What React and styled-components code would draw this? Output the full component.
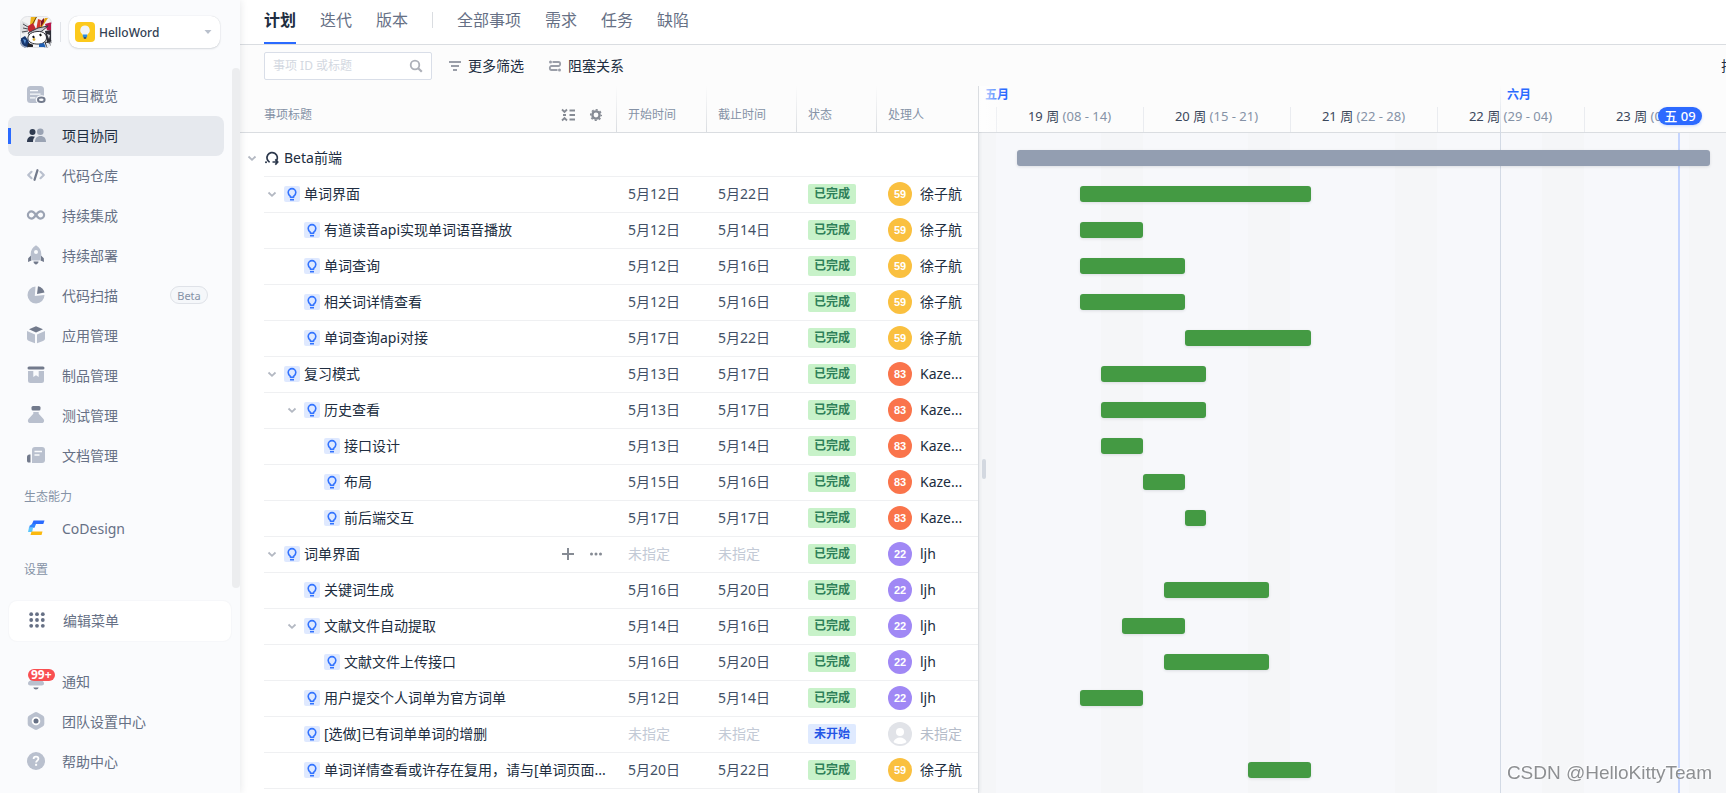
import React from "react";
import styled, { createGlobalStyle, css } from "styled-components";

const DAY = 21;
const FONT = `"Noto Sans", "Noto Sans CJK SC", sans-serif`;
const C = {
  text: "#202d40",
  sub: "#667085",
  muted: "#8592a6",
  faint: "#c3cad6",
  blue: "#2a6aff",
  line: "#dadde1",
  light: "#b9c0ce",
  dark: "#727a8c",
};

const Global = createGlobalStyle`
  * { box-sizing: border-box; }
  body { margin: 0; font-family: ${FONT}; color: ${C.text}; font-size: 14px; background: #fff; overflow: hidden; }
  button, input, select { font: inherit; color: inherit; margin: 0; }
  button { background: none; border: 0; padding: 0; cursor: pointer; }
  a { color: inherit; text-decoration: none; }
  svg { display: block; flex: none; }
`;

/* ---------- shell ---------- */
const Shell = styled.div`
  display: flex;
  height: 100vh;
  overflow: hidden;
`;
const Sidebar = styled.aside`
  position: relative;
  z-index: 3;
  flex: 0 0 240px;
  display: flex;
  flex-direction: column;
  background: #fafbfd;
  box-shadow: 0 0 8px rgba(30, 40, 60, 0.12);
`;
const SideHead = styled.div`
  display: flex;
  align-items: center;
  gap: 8px;
  padding: 16px 20px;
`;
const HeadRule = styled.span`
  width: 1px;
  height: 20px;
  background: #e1e4e9;
`;
const ProjectBox = styled.label`
  flex: 1;
  min-width: 0;
  display: flex;
  align-items: center;
  gap: 4px;
  height: 32px;
  padding: 0 8px 0 6px;
  border-radius: 9px;
  background: #fff;
  box-shadow: 0 0 1px rgba(30, 40, 60, 0.2), 0 1px 2px rgba(30, 40, 60, 0.14);
`;
const ProjectSelect = styled.select`
  flex: 1;
  min-width: 0;
  appearance: none;
  border: 0;
  padding: 0;
  background: none;
  font-size: 12px;
  font-weight: 500;
  color: #333f54;
  outline: none;
`;
const NavScroll = styled.nav`
  position: relative;
  padding: 12px 16px 0 8px;
`;
const ScrollThumb = styled.span`
  position: absolute;
  top: 4px;
  bottom: -6px;
  right: 0;
  width: 8px;
  border-radius: 4px;
  background: #ecedef;
`;
const NavLink = styled.a`
  position: relative;
  display: flex;
  align-items: center;
  gap: 16px;
  height: 40px;
  padding: 0 16px 2px 18px;
  border-radius: 8px;
  color: ${C.sub};
  ${(p) =>
    p.$active &&
    css`
      background: #e6e9ee;
      color: ${C.text};
      &::before {
        content: "";
        position: absolute;
        left: 0;
        top: 12px;
        width: 3px;
        height: 16px;
        background: ${C.blue};
      }
    `}
`;
const BetaTag = styled.span`
  margin-left: auto;
  width: 38px;
  height: 18px;
  border: 1px solid #dfe2e8;
  border-radius: 9px;
  background: #f5f7fa;
  font-size: 11px;
  line-height: 17px;
  text-align: center;
  color: ${C.muted};
`;
const NavLabel = styled.h2`
  margin: 9px 0 0;
  padding-left: 16px;
  font-size: 12px;
  font-weight: 400;
  line-height: 24px;
  color: ${C.muted};
`;
const EditMenu = styled.button`
  display: flex;
  align-items: center;
  gap: 16px;
  height: 40px;
  margin: 19px 9px 0;
  padding: 0 18px 2px;
  border-radius: 8px;
  background: #fff;
  box-shadow: 0 0 2px rgba(30, 40, 60, 0.07);
  color: ${C.sub};
`;
const SideFoot = styled.div`
  margin-top: auto;
  padding: 0 16px 11px 8px;
`;
const Count = styled.span`
  position: absolute;
  left: 20px;
  top: 7px;
  height: 12px;
  padding: 0 3px;
  border-radius: 6px;
  background: #f94f51;
  color: #fff;
  font-size: 12px;
  font-weight: 700;
  line-height: 12px;
`;

/* ---------- main ---------- */
const Main = styled.main`
  flex: 1;
  min-width: 0;
  display: flex;
  flex-direction: column;
`;
const Tabs = styled.nav`
  display: flex;
  align-items: center;
  gap: 24px;
  flex: 0 0 45px;
  padding: 0 24px;
  border-bottom: 1px solid ${C.line};
  font-size: 16px;
`;
const Tab = styled.a`
  height: 44px;
  line-height: 40px;
  white-space: nowrap;
  color: ${C.sub};
  ${(p) =>
    p.$active &&
    css`
      color: ${C.text};
      font-weight: 700;
      border-bottom: 2px solid ${C.blue};
    `}
`;
const TabRule = styled.span`
  width: 1px;
  height: 16px;
  margin-bottom: 4px;
  background: ${C.line};
`;
const Toolbar = styled.div`
  position: relative;
  z-index: 2;
  display: flex;
  align-items: center;
  flex: 0 0 41px;
  padding-left: 24px;
  background: #fcfcfc;
  overflow: hidden;
`;
const SearchBox = styled.label`
  display: flex;
  align-items: center;
  width: 168px;
  height: 28px;
  margin-right: 16px;
  padding: 0 8px;
  border: 1px solid #d9dee8;
  border-radius: 2px;
  background: #fff;
`;
const SearchInput = styled.input`
  flex: 1;
  min-width: 0;
  border: 0;
  padding: 0;
  outline: none;
  background: none;
  font-size: 12px;
  &::placeholder {
    color: #d3d8e1;
    opacity: 1;
  }
`;
const ToolButton = styled.button`
  display: flex;
  align-items: center;
  gap: 6px;
  margin-right: 24px;
  line-height: 20px;
  white-space: nowrap;
`;
const SortButton = styled(ToolButton)`
  flex: 0 0 28px;
  margin-left: auto;
  margin-right: -23px;
`;
const Board = styled.div`
  display: flex;
  flex: 1;
  min-height: 0;
`;

/* ---------- task table ---------- */
const TablePane = styled.section`
  flex: 0 0 739px;
  position: relative;
  z-index: 1;
  border-right: 1px solid ${C.line};
  background: #fff;
  box-shadow: 1px 0 3px rgba(30, 40, 60, 0.07);
`;
const Table = styled.table`
  width: 100%;
  table-layout: fixed;
  border-collapse: separate;
  border-spacing: 0;
`;
const HeadCell = styled.th`
  height: 47px;
  width: ${(p) => p.$w}px;
  padding: 11px 12px 0;
  border-bottom: 1px solid ${C.line};
  background: ${(p) =>
    p.$rule
      ? `linear-gradient(#fcfcfc, ${C.line}) left top / 1px 100% no-repeat, #fcfcfc`
      : "#fcfcfc"};
  text-align: left;
  font-size: 12px;
  font-weight: 400;
  line-height: 16px;
  color: ${C.muted};
`;
const HeadTitle = styled.div`
  display: flex;
  align-items: center;
  gap: 12px;
  padding-left: 12px;
`;
const Spacer = styled.span`
  flex: 1;
`;
const Cell = styled.td`
  height: ${(p) => (p.$tall ? 44 : 36)}px;
  padding: ${(p) => (p.$tall ? 8 : 0)}px 0 2px ${(p) => (p.$title ? 0 : 12)}px;
  background: linear-gradient(#eff0f2, #eff0f2) ${(p) => (p.$title ? 24 : 0)}px 100% / 100% 1px no-repeat;
  white-space: nowrap;
  line-height: 20px;
  color: ${(p) => (p.$empty ? C.faint : "#425066")};
`;
const TitleLine = styled.div`
  display: flex;
  align-items: center;
  gap: 4px;
  padding: 0 12px 0 ${(p) => 4 + p.$level * 20}px;
  color: ${C.text};
`;
const TitleText = styled.span`
  flex: 1;
  min-width: 0;
`;
const Toggle = styled.button`
  flex: 0 0 16px;
  height: 16px;
`;
const ToggleSlot = styled.span`
  flex: 0 0 16px;
`;
const RowActions = styled.span`
  display: flex;
  gap: 12px;
`;
const KindBox = styled.span`
  display: grid;
  place-items: center;
  flex: 0 0 16px;
  height: 16px;
  border-radius: 2px;
  background: ${(p) => (p.$plain ? "none" : "#dfe9ff")};
`;
const Status = styled.span`
  display: block;
  width: 48px;
  border-radius: 2px;
  text-align: center;
  font-size: 12px;
  font-weight: 700;
  line-height: 20px;
  background: ${(p) => (p.$open ? "#dfeaff" : "#c8f2c9")};
  color: ${(p) => (p.$open ? "#2456e6" : "#2f8059")};
`;
const Person = styled.div`
  display: flex;
  align-items: center;
  gap: 8px;
  color: ${(p) => (p.$empty ? "#b5bcc9" : C.text)};
`;
const Avatar = styled.span`
  width: 24px;
  height: 24px;
  border-radius: 50%;
  background: ${(p) => p.$color};
  color: #fff;
  text-align: center;
  font: 700 11px/24px "Liberation Sans", sans-serif;
`;

/* ---------- gantt ---------- */
const GanttPane = styled.section`
  position: relative;
  flex: 1;
  min-width: 0;
  display: flex;
  flex-direction: column;
  overflow: hidden;
`;
const GanttHead = styled.div`
  position: relative;
  flex: 0 0 47px;
  border-bottom: 1px solid ${C.line};
  background: #fcfcfc;
  &::before {
    content: "";
    position: absolute;
    z-index: 1;
    inset: 0 auto 0 0;
    width: 24px;
    background: linear-gradient(90deg, rgba(255, 255, 255, 0.9), rgba(255, 255, 255, 0));
  }
`;
const Months = styled.div`
  display: flex;
  height: 21px;
  font-size: 12px;
  font-weight: 700;
  line-height: 18px;
  color: ${C.blue};
`;
const Month = styled.span`
  flex: 0 0 ${(p) => p.$w}px;
  padding-left: 6px;
`;
const Weeks = styled.div`
  display: flex;
  height: 25px;
  margin-left: 17px;
`;
const Week = styled.span`
  flex: 0 0 ${7 * DAY}px;
  padding-right: 1px;
  border-left: 1px solid #eaecf0;
  text-align: center;
  font-size: 13px;
  line-height: 19px;
  white-space: pre;
  color: ${C.muted};
`;
const WeekNo = styled.span`
  color: #3b475b;
`;
const TodayPill = styled.span`
  position: absolute;
  z-index: 2;
  left: ${17 + 31 * DAY + 11}px;
  top: 21px;
  width: 44px;
  border-radius: 9px;
  background: #2d6aff;
  color: #fff;
  text-align: center;
  font-size: 13px;
  font-weight: 500;
  line-height: 18px;
  box-shadow: 0 1px 3px rgba(45, 106, 255, 0.25);
`;
const GanttBody = styled.div`
  position: relative;
  flex: 1;
  background: linear-gradient(#f5f6f8, #f5f6f8) 0 0 / 17px 100% no-repeat,
    repeating-linear-gradient(90deg, #f7f8fb 0 105px, #f5f6f8 105px 147px) 17px 0;
`;
const MonthLine = styled.span`
  position: absolute;
  z-index: 1;
  left: ${17 + 24 * DAY}px;
  top: 0;
  bottom: 0;
  width: 1px;
  background: linear-gradient(rgba(211, 218, 229, 0), #d3dae5 46px);
`;
const TodayLine = styled.span`
  position: absolute;
  left: ${17 + 32 * DAY + 10}px;
  top: 0;
  bottom: 0;
  width: 2px;
  background: #c5d5ff;
`;
const Lane = styled.div`
  position: relative;
  display: flex;
  align-items: center;
  height: ${(p) => (p.$tall ? 44 : 36)}px;
  padding: ${(p) => (p.$tall ? 8 : 0)}px 0 2px 17px;
`;
const Bar = styled.span`
  flex: 0 0 ${(p) => p.$days * DAY}px;
  height: 16px;
  margin-left: ${(p) => p.$offset * DAY}px;
  z-index: 2;
  border-radius: 3px;
  background: ${(p) => (p.$group ? "#939eb1" : "#449a43")};
  box-shadow: 0 1px 3px rgba(30, 40, 60, 0.12);
`;
const Handle = styled.span`
  position: absolute;
  z-index: 1;
  left: 3px;
  top: 50%;
  width: 4px;
  height: 20px;
  margin-top: -4px;
  border-radius: 2px;
  background: #d3d8e0;
`;
const Watermark = styled.span`
  position: fixed;
  z-index: 5;
  right: 14px;
  bottom: 8px;
  font: 19px/24px "Liberation Sans", sans-serif;
  color: #8d8f92;
  text-shadow: -1px -1px 0 #fff;
`;

/* ---------- icons ---------- */
const Svg = ({ s = 20, v = 20, children, ...r }) => (
  <svg width={s} height={s} viewBox={`0 0 ${v} ${v}`} fill="none" aria-hidden="true" {...r}>
    {children}
  </svg>
);

const icons = {
  overview: (
    <>
      <rect x="1" y="1" width="17" height="17" rx="3.5" fill={C.light} />
      <path d="M4 5.6h8M4 9.2h10.500M4 12.800h5.500" stroke="#fafbfd" strokeWidth="1.300" />
      <ellipse cx="15.300" cy="14.800" rx="5.600" ry="4.600" fill="#fafbfd" />
      <ellipse cx="15.300" cy="14.800" rx="3.300" ry="2.300" stroke={C.dark} strokeWidth="2" />
    </>
  ),
  team: (
    <>
      <circle cx="14.300" cy="6.800" r="3.300" fill="#9aa3b3" />
      <path d="M9 17c0-3.800 2-6 5.500-6s5.500 2.200 5.500 6z" fill="#9aa3b3" />
      <circle cx="6.500" cy="7" r="3" fill="#2f3b50" />
      <path d="M1 17c0-3.800 2-5.800 5.200-5.800 1 0 2 .2 2.800.6C7.700 13 7 14.700 7 17z" fill="#2f3b50" />
    </>
  ),
  code: (
    <g strokeWidth="2.200" strokeLinecap="round" strokeLinejoin="round">
      <path d="M5.500 6.800 2.200 10l3.300 3.200M14.500 6.800 17.800 10l-3.300 3.200" stroke={C.light} />
      <path d="M11.500 5.200 8.500 14.800" stroke={C.dark} />
    </g>
  ),
  loop: (
    <path
      d="M10 10c-1.400-2-2.600-3.600-4.500-3.600a3.600 3.600 0 0 0 0 7.200c1.900 0 3.100-1.600 4.500-3.600s2.600-3.600 4.500-3.600a3.600 3.600 0 0 1 0 7.200c-1.900 0-3.100-1.600-4.500-3.600z"
      stroke="#9ba3b3"
      strokeWidth="2.200"
    />
  ),
  rocket: (
    <>
      <path d="M5 10.500 2.200 13.200 2 17l3.500-1.600zM15 10.500l2.800 2.700.2 3.800-3.500-1.600zM7.500 16.500h5c0 2-1.300 2-2.500 3.300-1.200-1.300-2.500-1.300-2.500-3.300z" fill={C.dark} />
      <path d="M10 .2c3.500 2 5.300 5.300 5.300 9 0 2.600-.8 4.600-1.800 6.300h-7c-1-1.700-1.800-3.700-1.800-6.300 0-3.700 1.800-7 5.300-9z" fill={C.light} />
      <circle cx="10" cy="7" r="2" fill="#fafbfd" />
    </>
  ),
  pie: (
    <>
      <path d="M9.500 1.500A8.500 8.500 0 1 0 18.500 10L8.800 11z" fill={C.light} />
      <path d="M12 1.200c3.300.6 5.800 3 6.500 6.300L11 9z" fill={C.dark} />
    </>
  ),
  cube: (
    <>
      <path d="M10 1.200 17 4.200 10 7.400 3 4.200z" fill={C.dark} />
      <path d="M1 6l8 3.600v8.600l-6-2.200c-1.300-.5-2-1.200-2-2.500zM19 6l-8 3.600v8.600l6-2.200c1.300-.5 2-1.200 2-2.500z" fill={C.light} />
    </>
  ),
  box: (
    <>
      <rect x="1.500" y="1.500" width="17" height="3" rx="1.500" fill={C.dark} />
      <path d="M2 6h16v9.500a2.500 2.500 0 0 1-2.500 2.500h-11A2.500 2.500 0 0 1 2 15.500z" fill={C.light} />
      <path d="M7.300 6h5.400v6L10 10.300 7.300 12z" fill="#fafbfd" />
    </>
  ),
  flask: (
    <>
      <rect x="5.500" y="1" width="9" height="4.500" rx="1.500" fill={C.dark} />
      <path d="M7.300 7h5.400v1.700l4.800 5.300c1.300 1.800.4 4-1.800 4H4.300c-2.200 0-3.100-2.200-1.800-4l4.800-5.300z" fill={C.light} />
    </>
  ),
  docs: (
    <>
      <path d="M4.500 9.500v8H2.800C1.600 17.500 1 16.900 1 15.700v-4C1 10.100 2.500 9.500 4.500 9.500z" fill={C.dark} />
      <path d="M9 2h7a3 3 0 0 1 3 3v10a3 3 0 0 1-3 3H6V5a3 3 0 0 1 3-3z" fill={C.light} />
      <path d="M8.500 6.500h7.500M8.500 10h5" stroke="#fafbfd" strokeWidth="1.500" />
    </>
  ),
  codesign: (
    <>
      <path d="M7.500 2.500h11L17.300 6H6z" fill="#2a6bff" />
      <path d="M6 6h4l-1.500 3.800H2.800L4 7.500z" fill="#2f86ff" />
      <path d="M3 9.500h4l-.8 4.500H2z" fill="#5cc6fb" />
      <path d="M5.500 13.500h11l-1 3.500H4.500z" fill="#fbb90f" />
    </>
  ),
  grid: (
    <g fill={C.sub}>
      {[4.2, 10, 15.800].map((y) => [4.2, 10, 15.800].map((x) => <circle key={x + "-" + y} cx={x} cy={y} r="1.900" />))}
    </g>
  ),
  bell: (
    <>
      <path d="M10 1.500c3.300 0 5.300 2.300 5.300 5.500v2.500c2 .6 2.700 1.500 2.700 3 0 1.300-.9 2-2.300 2H4.300C2.900 14.500 2 13.800 2 12.500c0-1.500.7-2.400 2.700-3V7c0-3.200 2-5.500 5.300-5.500z" fill={C.light} />
      <path d="M7.300 16.500h5.400c-.4 1.300-1.400 2-2.700 2s-2.300-.7-2.700-2z" fill={C.dark} />
    </>
  ),
  hex: (
    <>
      <path d="M8.500 1.500a3 3 0 0 1 3 0l5.200 3A3 3 0 0 1 18.300 7v6a3 3 0 0 1-1.600 2.500l-5.200 3a3 3 0 0 1-3 0l-5.200-3A3 3 0 0 1 1.700 13V7a3 3 0 0 1 1.600-2.500z" fill={C.light} />
      <circle cx="10" cy="10" r="4.300" fill="#fff" />
      <circle cx="10" cy="10" r="2.500" fill={C.sub} />
    </>
  ),
  help: (
    <>
      <circle cx="10" cy="10" r="9" fill={C.light} />
      <path d="M7.600 8c0-1.500 1-2.300 2.400-2.300s2.400.8 2.400 2.100c0 1.800-2.300 1.800-2.300 3.700" stroke="#fff" strokeWidth="1.800" />
      <rect x="9.100" y="12.800" width="2" height="2" fill="#fff" />
    </>
  ),
};

const TeamLogo = () => (
  <Svg s={32} v={32}>
    <defs>
      <clipPath id="logo-clip">
        <rect width="32" height="32" rx="7" />
      </clipPath>
    </defs>
    <g clipPath="url(#logo-clip)">
      <rect width="32" height="32" fill="#f3f3f4" />
      <path d="M2 5 8 8l1 7-6 3-3-3z" fill="#dcdde0" />
      <path d="M3 8l5 3M3 12l5 1M2 16l6-1" stroke="#4a4b52" />
      <path d="M11 0h6l-3 8-4 1z" fill="#edb31c" />
      <path d="M17 0 12 9" stroke="#6a4a12" />
      <path d="M25 2h3l-6 9-5 3z" fill="#e0a21b" />
      <path d="M25 8l7-2v9l-5-1z" fill="#b8184a" />
      <path d="M8 10l5-3 3 6-6 4-2-3z" fill="#c22730" />
      <path d="M18 3l3 1-1 8-4 3z" fill="#d23a2c" />
      <path d="M21 5l3-3v4l-3 5z" fill="#7d1322" />
      <path d="M8 17 18 12l10-2-6 5-12 5z" fill="#c9cbd1" stroke="#3b3c44" />
      <path d="M9 19c3-4 13-5 16-1s1 7-2 9-11 1-13-1-3-4-1-7z" fill="#fff" stroke="#33343b" />
      <path d="M13 20l1 2M20 18l1 2" stroke="#111" strokeWidth="2" />
      <circle cx="14" cy="23.500" r="1.400" fill="#d9b13c" />
      <path d="M25 15l7-1v13l-5-1z" fill="#2d2e36" />
      <path d="M27 18l3 1-1 4z" fill="#d8d9dd" />
      <path d="M0 23l5-3 3 4 2 5-4 3H0z" fill="#17376f" />
      <path d="M3 23l3 1-1 4z" fill="#5e97d8" />
      <path d="M8 27l6 2-2 3H7z" fill="#22242c" />
      <path d="M19 28l5-1 2 5h-7z" fill="#1f5fb4" />
      <path d="M25 26l5 1 1 5h-4z" fill="#e9edf4" stroke="#33343b" />
      <path d="M13 29h5l-1 3h-4z" fill="#f6f6f8" />
    </g>
    <rect x=".5" y=".5" width="31" height="31" rx="7" stroke="#e1e3e7" />
  </Svg>
);
const ProjectIcon = () => (
  <Svg>
    <rect width="20" height="20" rx="4" fill="#fcc91c" />
    <path d="M10 3.500a4.700 4.700 0 0 0-2.800 8.500l.6 1.300h4.400l.6-1.300A4.700 4.700 0 0 0 10 3.500z" fill="#f1f4f8" />
    <path d="M7.800 12.500h4.400v1.600c0 1.400-.9 2.100-2.200 2.100s-2.200-.7-2.200-2.100z" fill="#2d8ce0" />
    <rect x="8.800" y="15.200" width="2.400" height="1.600" fill="#3b4658" />
  </Svg>
);
const Bulb = () => (
  <Svg s={16} v={16}>
    <path d="M6.400 11.300v-.9C5.100 9.300 4.200 8.100 4.200 6.400a3.800 3.800 0 0 1 7.600 0c0 1.700-.9 2.900-2.200 4v.9z" stroke="#3273ff" strokeWidth="1.600" strokeLinejoin="round" />
    <path d="M6 13.700h4" stroke="#3273ff" strokeWidth="1.600" />
  </Svg>
);
const Sprint = () => (
  <Svg s={16} v={16}>
    <path d="M5.600 12.300A5.200 5.200 0 1 1 12.400 10.800" stroke="#2c384c" strokeWidth="1.700" />
    <path d="M8.500 12H13M11.300 9.400l2.400 2.600-2.400 2.600" stroke="#2c384c" strokeWidth="1.700" />
    <circle cx="2" cy="12.300" r="1" fill="#2c384c" />
  </Svg>
);
const Chevron = () => (
  <Svg s={16} v={16}>
    <path d="m4.500 6.500 3.500 3.300 3.500-3.300" stroke="#b3b8c2" strokeWidth="1.800" />
  </Svg>
);

const Nav = ({ icon, children, active, extra }) => (
  <NavLink href="#" $active={active} aria-current={active ? "page" : undefined}>
    <Svg>{icons[icon]}</Svg>
    {children}
    {extra}
  </NavLink>
);

/* ---------- data ---------- */
const people = {
  xu: { name: "徐子航", no: 59, color: "#fac03f" },
  kaze: { name: "Kaze...", no: 83, color: "#fa744b" },
  ljh: { name: "ljh", no: 22, color: "#a088f5" },
};
const tasks = [
  { level: 1, open: true, title: "单词界面", from: 12, to: 22, who: "xu" },
  { level: 2, title: "有道读音api实现单词语音播放", from: 12, to: 14, who: "xu" },
  { level: 2, title: "单词查询", from: 12, to: 16, who: "xu" },
  { level: 2, title: "相关词详情查看", from: 12, to: 16, who: "xu" },
  { level: 2, title: "单词查询api对接", from: 17, to: 22, who: "xu" },
  { level: 1, open: true, title: "复习模式", from: 13, to: 17, who: "kaze" },
  { level: 2, open: true, title: "历史查看", from: 13, to: 17, who: "kaze" },
  { level: 3, title: "接口设计", from: 13, to: 14, who: "kaze" },
  { level: 3, title: "布局", from: 15, to: 16, who: "kaze" },
  { level: 3, title: "前后端交互", from: 17, to: 17, who: "kaze" },
  { level: 1, open: true, title: "词单界面", who: "ljh", actions: true },
  { level: 2, title: "关键词生成", from: 16, to: 20, who: "ljh" },
  { level: 2, open: true, title: "文献文件自动提取", from: 14, to: 16, who: "ljh" },
  { level: 3, title: "文献文件上传接口", from: 16, to: 20, who: "ljh" },
  { level: 2, title: "用户提交个人词单为官方词单", from: 12, to: 14, who: "ljh" },
  { level: 2, title: "[选做]已有词单单词的增删", todo: true },
  { level: 2, title: "单词详情查看或许存在复用，请与[单词页面...", from: 20, to: 22, who: "xu" },
];
const weeks = [
  ["19 周", "(08 - 14)"],
  ["20 周", "(15 - 21)"],
  ["21 周", "(22 - 28)"],
  ["22 周", "(29 - 04)"],
  ["23 周", "(05 - 11)"],
];

const ToggleButton = () => (
  <Toggle aria-label="折叠">
    <Chevron />
  </Toggle>
);

const TaskRow = ({ task }) => {
  const who = people[task.who];
  return (
    <tr>
      <Cell $title>
        <TitleLine $level={task.level}>
          {task.open ? <ToggleButton /> : <ToggleSlot />}
          <KindBox>
            <Bulb />
          </KindBox>
          <TitleText>{task.title}</TitleText>
          {task.actions && (
            <RowActions>
              <button aria-label="添加">
                <Svg s={16} v={16}>
                  <path d="M8 2v12M2 8h12" stroke="#868b94" strokeWidth="2" />
                </Svg>
              </button>
              <button aria-label="更多">
                <Svg s={16} v={16} fill="#868b94">
                  <circle cx="3.500" cy="8" r="1.500" />
                  <circle cx="8" cy="8" r="1.500" />
                  <circle cx="12.500" cy="8" r="1.500" />
                </Svg>
              </button>
            </RowActions>
          )}
        </TitleLine>
      </Cell>
      <Cell $empty={!task.from}>{task.from ? `5月${task.from}日` : "未指定"}</Cell>
      <Cell $empty={!task.to}>{task.to ? `5月${task.to}日` : "未指定"}</Cell>
      <Cell>
        <Status $open={task.todo}>{task.todo ? "未开始" : "已完成"}</Status>
      </Cell>
      <Cell>
        <Person $empty={!who}>
          {who ? (
            <Avatar $color={who.color}>{who.no}</Avatar>
          ) : (
            <Svg s={24} v={24}>
              <circle cx="12" cy="12" r="12" fill="#e1e3e8" />
              <circle cx="12" cy="10" r="4" fill="#fff" />
              <path d="M5.500 20c1-3 3.500-4.500 6.500-4.500s5.500 1.500 6.500 4.500c-3.500 2.700-9.500 2.700-13 0z" fill="#fff" />
            </Svg>
          )}
          {who ? who.name : "未指定"}
        </Person>
      </Cell>
    </tr>
  );
};

export default function App() {
  return (
    <Shell>
      <Global />
      <Sidebar>
        <SideHead>
          <TeamLogo />
          <HeadRule />
          <ProjectBox>
            <ProjectIcon />
            <ProjectSelect aria-label="项目">
              <option>HelloWord</option>
            </ProjectSelect>
            <Svg s={8} v={8}>
              <path d="M.5 2h7L4 6z" fill="#b9c0cc" />
            </Svg>
          </ProjectBox>
        </SideHead>
        <NavScroll>
          <Nav icon="overview">项目概览</Nav>
          <Nav icon="team" active>项目协同</Nav>
          <Nav icon="code">代码仓库</Nav>
          <Nav icon="loop">持续集成</Nav>
          <Nav icon="rocket">持续部署</Nav>
          <Nav icon="pie" extra={<BetaTag>Beta</BetaTag>}>代码扫描</Nav>
          <Nav icon="cube">应用管理</Nav>
          <Nav icon="box">制品管理</Nav>
          <Nav icon="flask">测试管理</Nav>
          <Nav icon="docs">文档管理</Nav>
          <NavLabel>生态能力</NavLabel>
          <Nav icon="codesign">CoDesign</Nav>
          <NavLabel>设置</NavLabel>
          <ScrollThumb />
        </NavScroll>
        <EditMenu>
          <Svg>{icons.grid}</Svg>
          编辑菜单
        </EditMenu>
        <SideFoot>
          <Nav icon="bell" extra={<Count>99+</Count>}>通知</Nav>
          <Nav icon="hex">团队设置中心</Nav>
          <Nav icon="help">帮助中心</Nav>
        </SideFoot>
      </Sidebar>

      <Main>
        <Tabs>
          <Tab href="#" $active>计划</Tab>
          <Tab href="#">迭代</Tab>
          <Tab href="#">版本</Tab>
          <TabRule />
          <Tab href="#">全部事项</Tab>
          <Tab href="#">需求</Tab>
          <Tab href="#">任务</Tab>
          <Tab href="#">缺陷</Tab>
        </Tabs>
        <Toolbar>
          <SearchBox>
            <SearchInput placeholder="事项 ID 或标题" aria-label="搜索事项" />
            <Svg s={14} v={14}>
              <circle cx="6" cy="6" r="4.300" stroke="#adb0b8" strokeWidth="1.800" />
              <path d="m9.200 9.200 3.600 3.600" stroke="#adb0b8" strokeWidth="2.200" />
            </Svg>
          </SearchBox>
          <ToolButton>
            <Svg s={14} v={14}>
              <path d="M1 3h12M3 7h8M5 11h4" stroke="#9a9ea8" strokeWidth="1.800" />
            </Svg>
            更多筛选
          </ToolButton>
          <ToolButton>
            <Svg s={14} v={14}>
              <path d="M4.500 3h6a1.700 2 0 0 1 0 4h-7a1.700 2 0 0 0 0 4h6" stroke="#9a9ea8" strokeWidth="1.800" />
              <circle cx="2.500" cy="3" r="1.500" fill="#9a9ea8" />
              <circle cx="11.500" cy="11" r="1.500" fill="#9a9ea8" />
            </Svg>
            阻塞关系
          </ToolButton>
          <SortButton>排序</SortButton>
        </Toolbar>
        <Board>
          <TablePane>
            <Table>
              <thead>
                <tr>
                  <HeadCell $w={376}>
                    <HeadTitle>
                      事项标题
                      <Spacer />
                      <button aria-label="全部折叠">
                        <Svg s={16} v={16}>
                          <path d="M2 2.500l2.500 2.500L7 2.500M2 13.500 4.500 11 7 13.500M9.500 3.500H15M9.500 8H15M9.500 12.500H15M3 8h3" stroke="#868b94" strokeWidth="1.800" />
                        </Svg>
                      </button>
                      <button aria-label="设置列">
                        <Svg s={16} v={16}>
                          <circle cx="8" cy="8" r="3.600" stroke="#868b94" strokeWidth="2.400" />
                          <circle cx="8" cy="8" r="5.300" stroke="#868b94" strokeWidth="1.500" strokeDasharray="2.100 2.063" strokeDashoffset="1" />
                        </Svg>
                      </button>
                    </HeadTitle>
                  </HeadCell>
                  <HeadCell $w={90} $rule>开始时间</HeadCell>
                  <HeadCell $w={90} $rule>截止时间</HeadCell>
                  <HeadCell $w={80} $rule>状态</HeadCell>
                  <HeadCell $w={102} $rule>处理人</HeadCell>
                </tr>
              </thead>
              <tbody>
                <tr>
                  <Cell $title $tall>
                    <TitleLine $level={0}>
                      <ToggleButton />
                      <KindBox $plain>
                        <Sprint />
                      </KindBox>
                      <TitleText>Beta前端</TitleText>
                    </TitleLine>
                  </Cell>
                  <Cell />
                  <Cell />
                  <Cell />
                  <Cell />
                </tr>
                {tasks.map((t) => (
                  <TaskRow key={t.title} task={t} />
                ))}
              </tbody>
            </Table>
          </TablePane>
          <GanttPane>
            <GanttHead>
              <Months>
                <Month $w={17 + 24 * DAY + 1}>五月</Month>
                <Month $w={30 * DAY}>六月</Month>
              </Months>
              <Weeks>
                {weeks.map(([no, range]) => (
                  <Week key={no}>
                    <WeekNo>{no}</WeekNo> {range}
                  </Week>
                ))}
              </Weeks>
              <TodayPill>五 09</TodayPill>
            </GanttHead>
            <MonthLine />
            <GanttBody>
              <TodayLine />
              <Lane $tall>
                <Bar $group $offset={1} $days={33} />
              </Lane>
              {tasks.map((t) => (
                <Lane key={t.title}>{t.from && <Bar $offset={t.from - 8} $days={t.to - t.from + 1} />}</Lane>
              ))}
              <Handle />
            </GanttBody>
          </GanttPane>
        </Board>
      </Main>
      <Watermark>CSDN @HelloKittyTeam</Watermark>
    </Shell>
  );
}
